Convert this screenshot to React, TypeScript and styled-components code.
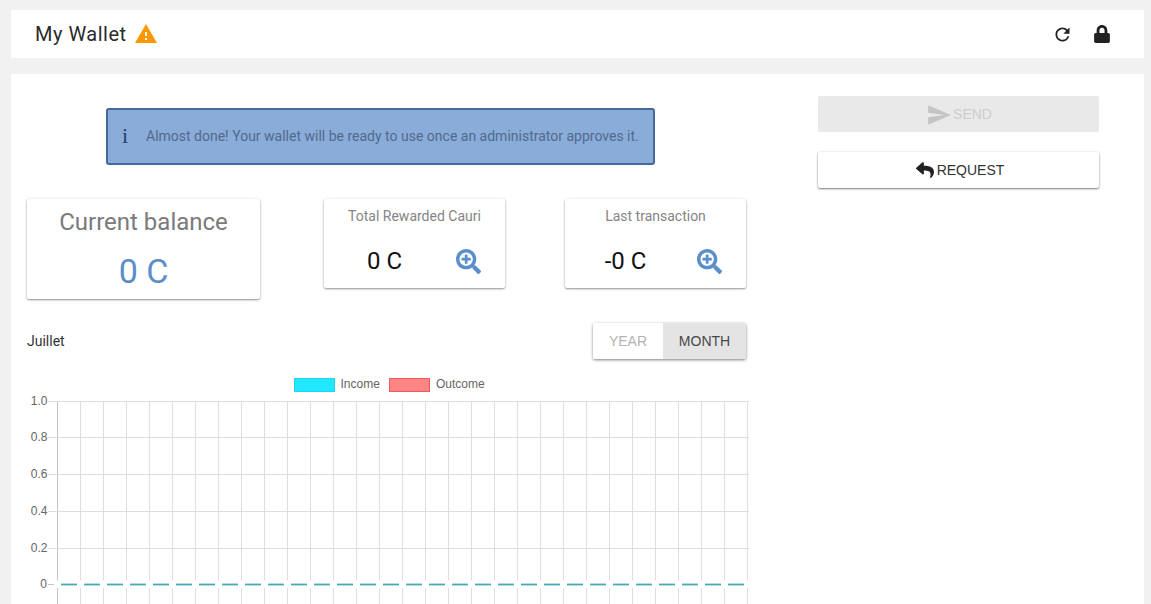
import React from "react";
import styled, { createGlobalStyle } from "styled-components";
import { FaLock, FaReply, FaSearchPlus } from "react-icons/fa";
import { MdRefresh, MdSend, MdWarning } from "react-icons/md";

const Global = createGlobalStyle`
  html, body { margin: 0; height: 604px; overflow: hidden; background: #f1f1f1; }
  body { font-family: Roboto, "Liberation Sans", sans-serif; }
  * { box-sizing: border-box; }
`;

const Page = styled.div`
  padding: 10px 7px 0 11px;
  display: flex;
  flex-direction: column;
  gap: 16px;
`;

const Header = styled.header`
  height: 48px;
  background: #fff;
  display: flex;
  align-items: center;
  padding: 0 33px 0 24px;
`;

const Title = styled.h1`
  margin: 0;
  font-size: 20px;
  font-weight: 400;
  letter-spacing: 0.5px;
  color: #2b2b2b;
`;

const WarnIcon = styled(MdWarning)`
  color: #ff9800;
  font-size: 24px;
  margin-left: 7.5px;
`;

const HeaderActions = styled.div`
  margin-left: auto;
  display: flex;
  align-items: center;
  gap: 20px;
  color: #212121;
`;

const Main = styled.main`
  background: #fff;
  height: 530px;
  display: grid;
  grid-template-columns: 719px 281px;
  column-gap: 72px;
  padding: 22px 0 0 16px;
  overflow: hidden;
`;

const Left = styled.section`
  display: flex;
  flex-direction: column;
`;

const Alert = styled.div`
  width: 549px;
  height: 57px;
  margin: 12px 0 0 79px;
  background: #89acd8;
  border: 2px solid #44699b;
  border-radius: 3px;
  display: flex;
  align-items: center;
  padding: 0 0 1px 14px;
  color: #526a8e;
  font-size: 14px;
  white-space: nowrap;
`;

const InfoGlyph = styled.span`
  font-family: "Liberation Serif", serif;
  font-size: 22px;
  color: #23426f;
  width: 24px;
  line-height: 1;
`;

const Cards = styled.div`
  display: flex;
  align-items: flex-start;
  margin-top: 34px;
`;

const Card = styled.div<{ $w: number; $h: number; $ml?: number }>`
  width: ${(p) => p.$w}px;
  height: ${(p) => p.$h}px;
  margin-left: ${(p) => p.$ml ?? 0}px;
  border-radius: 2px;
  background: #fff;
  box-shadow: 0 1px 2px rgba(0, 0, 0, 0.4), 0 0 4px rgba(0, 0, 0, 0.08);
  text-align: center;
`;

const BalanceLabel = styled.div`
  font-size: 24px;
  color: #7a7a7a;
  margin-top: 8px;
  line-height: 30px;
`;

const BalanceValue = styled.div`
  font-size: 34px;
  color: #5b8dc9;
  margin-top: 14px;
  line-height: 40px;
`;

const SmallLabel = styled.div`
  font-size: 14px;
  color: #858585;
  padding-top: 8px;
  line-height: 18px;
`;

const SmallRow = styled.div`
  display: flex;
  align-items: center;
  margin-top: 19px;
  padding-right: 24px;
  height: 34px;
`;

const SmallValue = styled.span`
  font-size: 24px;
  color: #111;
  flex: 1;
  text-align: center;
  padding: 0 32px 0 21px;
`;

const Zoom = styled(FaSearchPlus)`
  color: #5b8fcb;
  font-size: 25px;
`;

const Period = styled.div`
  display: flex;
  align-items: center;
  justify-content: space-between;
  margin-top: 24px;
  height: 36px;
`;

const Month = styled.span`
  font-size: 14px;
  color: #333;
`;

const Toggle = styled.div`
  display: flex;
  height: 36px;
  border-radius: 2px;
  overflow: hidden;
  box-shadow: 0 1px 3px rgba(0, 0, 0, 0.5);
`;

const ToggleItem = styled.div<{ $on?: boolean; $w: number }>`
  width: ${(p) => p.$w}px;
  display: flex;
  align-items: center;
  justify-content: center;
  font-family: "Liberation Sans", Arial, sans-serif;
  font-size: 14px;
  background: ${(p) => (p.$on ? "#e4e4e4" : "#fff")};
  color: ${(p) => (p.$on ? "#484848" : "#b3b3b3")};
`;

const Chart = styled.svg`
  display: block;
  margin: 14px 0 0 -16px;
  width: 745px;
  height: 231px;
  font-family: "Liberation Sans", Arial, sans-serif;
`;

const Right = styled.aside`
  display: flex;
  flex-direction: column;
  gap: 20px;
`;

const Action = styled.div<{ $disabled?: boolean }>`
  height: 36px;
  border-radius: 2px;
  display: flex;
  align-items: center;
  justify-content: center;
  gap: 3px;
  padding-left: 3px;
  font-family: "Liberation Sans", Arial, sans-serif;
  font-size: 14px;
  background: ${(p) => (p.$disabled ? "#e9e9e9" : "#fff")};
  color: ${(p) => (p.$disabled ? "#cdcdcd" : "#333")};
  box-shadow: ${(p) => (p.$disabled ? "none" : "0 1px 2px rgba(0,0,0,.5), 0 0 3px rgba(0,0,0,.08)")};
`;

const SendIcon = styled(MdSend)`
  font-size: 26px;
  margin: 1px -2px 0 -2px;
  color: #c4c4c4;
`;

const ReplyIcon = styled(FaReply)`
  font-size: 18px;
  color: #212121;
`;

const xs = Array.from({ length: 31 }, (_, i) => 46.5 + i * 23);
const ys = [
  { y: 328.5, t: "1.0" },
  { y: 364.5, t: "0.8" },
  { y: 401.5, t: "0.6" },
  { y: 438.5, t: "0.4" },
  { y: 475.5, t: "0.2" },
];
const zeroY = 511.5;
const GRID = "#dedede";

function WalletChart() {
  return (
    <Chart viewBox="0 300 745 231">
      <rect x="283.5" y="305.5" width="40" height="13" fill="#22e8ff" stroke="#22d4ee" />
      <text x="329.5" y="315" fontSize="12" fill="#666">Income</text>
      <rect x="378.5" y="305.5" width="40" height="13" fill="#ff8585" stroke="#ef5b5b" />
      <text x="425" y="315" fontSize="12" fill="#666">Outcome</text>
      {xs.map((x, i) => (
        <line key={x} x1={x} x2={x} y1={328} y2={531} stroke={i === 0 ? "#c4c4c4" : GRID} shapeRendering="crispEdges" />
      ))}
      {ys.map((r) => (
        <g key={r.t}>
          <line x1={37} x2={737.5} y1={r.y} y2={r.y} stroke={GRID} shapeRendering="crispEdges" />
          <text x="36.5" y={r.y + 3} textAnchor="end" fontSize="12" fill="#666">{r.t}</text>
        </g>
      ))}
      <line x1={37} x2={43} y1={zeroY} y2={zeroY} stroke="#c4c4c4" />
      <text x="36" y={zeroY + 3} textAnchor="end" fontSize="12" fill="#666">0</text>
      <rect x="43" y={zeroY - 4} width="695" height="7.5" fill="#fff" />
      {xs.slice(0, 30).map((x) => (
        <line key={x} x1={x + 3.5} x2={x + 19.5} y1={zeroY} y2={zeroY} stroke="#4aa9b8" strokeWidth="1.8" />
      ))}
    </Chart>
  );
}

export default function App() {
  return (
    <>
      <Global />
      <Page>
        <Header>
          <Title>My Wallet</Title>
          <WarnIcon />
          <HeaderActions>
            <MdRefresh size={21} />
            <FaLock size={18} />
          </HeaderActions>
        </Header>
        <Main>
          <Left>
            <Alert>
              <InfoGlyph>i</InfoGlyph>
              Almost done! Your wallet will be ready to use once an administrator approves it.
            </Alert>
            <Cards>
              <Card $w={233} $h={100}>
                <BalanceLabel>Current balance</BalanceLabel>
                <BalanceValue>0 C</BalanceValue>
              </Card>
              <Card $w={181} $h={89} $ml={64}>
                <SmallLabel>Total Rewarded Cauri</SmallLabel>
                <SmallRow>
                  <SmallValue>0 C</SmallValue>
                  <Zoom />
                </SmallRow>
              </Card>
              <Card $w={181} $h={89} $ml={60}>
                <SmallLabel>Last transaction</SmallLabel>
                <SmallRow>
                  <SmallValue>-0 C</SmallValue>
                  <Zoom />
                </SmallRow>
              </Card>
            </Cards>
            <Period>
              <Month>Juillet</Month>
              <Toggle>
                <ToggleItem $w={70}>YEAR</ToggleItem>
                <ToggleItem $w={83} $on>MONTH</ToggleItem>
              </Toggle>
            </Period>
            <WalletChart />
          </Left>
          <Right>
            <Action $disabled>
              <SendIcon />
              SEND
            </Action>
            <Action>
              <ReplyIcon />
              REQUEST
            </Action>
          </Right>
        </Main>
      </Page>
    </>
  );
}
